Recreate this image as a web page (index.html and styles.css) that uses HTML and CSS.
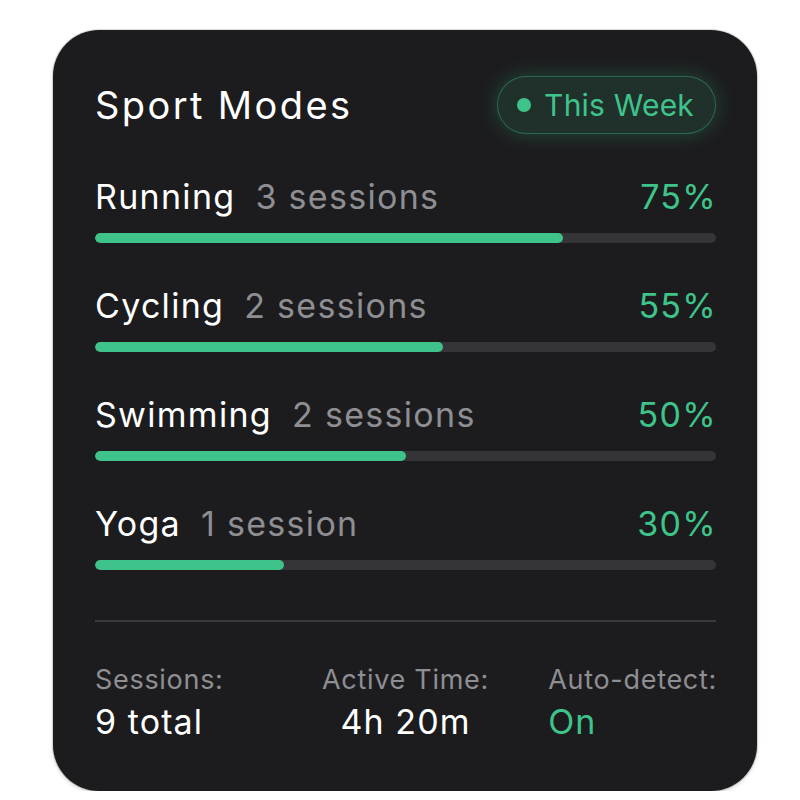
FILE: index.html
```html
<!DOCTYPE html>
<html>
<head>
<meta charset="utf-8">
<link rel="stylesheet" href="styles.css">
</head>
<body>
<div class="card">
  <div class="header">
    <h1 class="title">Sport Modes</h1>
    <div class="pill"><span class="dot"></span>This Week</div>
  </div>
  <div class="rows">
    <div class="row">
      <div class="row-top">
        <div class="label"><span class="name">Running</span><span class="count">3 sessions</span></div>
        <span class="pct">75%</span>
      </div>
      <div class="track"><div class="fill" style="width:75.3%"></div></div>
    </div>
    <div class="row">
      <div class="row-top">
        <div class="label"><span class="name">Cycling</span><span class="count">2 sessions</span></div>
        <span class="pct">55%</span>
      </div>
      <div class="track"><div class="fill" style="width:56%"></div></div>
    </div>
    <div class="row">
      <div class="row-top">
        <div class="label"><span class="name">Swimming</span><span class="count">2 sessions</span></div>
        <span class="pct">50%</span>
      </div>
      <div class="track"><div class="fill" style="width:50%"></div></div>
    </div>
    <div class="row">
      <div class="row-top">
        <div class="label"><span class="name">Yoga</span><span class="count">1 session</span></div>
        <span class="pct">30%</span>
      </div>
      <div class="track"><div class="fill" style="width:30.5%"></div></div>
    </div>
  </div>
  <div class="divider"></div>
  <div class="stats">
    <div class="stat">
      <div class="stat-label">Sessions:</div>
      <div class="stat-value">9 total</div>
    </div>
    <div class="stat stat-center">
      <div class="stat-label">Active Time:</div>
      <div class="stat-value">4h 20m</div>
    </div>
    <div class="stat stat-end">
      <div class="stat-label">Auto-detect:</div>
      <div class="stat-value green">On</div>
    </div>
  </div>
</div>
</body>
</html>
```
FILE: styles.css
```css
* { box-sizing: border-box; }
body {
  margin: 0;
  background: #ffffff;
  font-family: Inter, "Noto Sans", sans-serif;
}
.card {
  margin: 30px 0 0 53px;
  width: 704px;
  height: 761px;
  background: #1c1c1e;
  border-radius: 46px;
  padding: 46px 41px 0 42px;
  box-shadow: 0 0 0 1px rgba(0,0,0,0.12), 0 2px 4px rgba(0,0,0,0.15);
}
.header {
  display: flex;
  justify-content: space-between;
  align-items: center;
  height: 58px;
}
.title {
  margin: 0;
  font-size: 38px;
  font-weight: 400;
  color: #ffffff;
  letter-spacing: 2.4px;
}
.pill {
  display: flex;
  align-items: center;
  gap: 13px;
  height: 58px;
  padding: 0 21px 0 19px;
  border-radius: 29px;
  border: 1.5px solid rgba(62, 196, 138, 0.38);
  background: rgba(62, 196, 138, 0.13);
  box-shadow: 0 0 20px rgba(62, 196, 138, 0.28);
  color: #3ec48a;
  font-size: 30px;
  letter-spacing: 0.2px;
}
.dot {
  width: 14px;
  height: 14px;
  border-radius: 50%;
  background: #3ec48a;
}
.rows {
  margin-top: 42px;
  display: flex;
  flex-direction: column;
  gap: 42px;
}
.row-top {
  display: flex;
  justify-content: space-between;
  align-items: center;
  height: 40px;
}
.label {
  display: flex;
  gap: 20px;
  font-size: 34px;
  letter-spacing: 1.3px;
}
.name { color: #ffffff; }
.count { color: #8e8e93; }
.pct {
  color: #3ec48a;
  font-size: 34px;
  letter-spacing: 1.3px;
  margin-right: -1px;
}
.track {
  margin-top: 17px;
  height: 10px;
  border-radius: 5px;
  background: #353538;
  overflow: hidden;
}
.fill {
  height: 100%;
  border-radius: 5px;
  background: #3ec48a;
}
.divider {
  margin-top: 50px;
  height: 1.5px;
  background: #3a3a3c;
}
.stats {
  margin-top: 42px;
  display: grid;
  grid-template-columns: 1fr 1fr 1fr;
}
.stat-label {
  font-size: 27px;
  color: #8e8e93;
  line-height: 32px;
  letter-spacing: 0.7px;
}
.stat-value {
  margin-top: 6px;
  font-size: 34px;
  color: #ffffff;
  line-height: 40px;
  letter-spacing: 1.1px;
}
.stat-center { text-align: center; }
.stat-end { justify-self: end; margin-right: -1px; }
.green { color: #3ec48a; }
```
